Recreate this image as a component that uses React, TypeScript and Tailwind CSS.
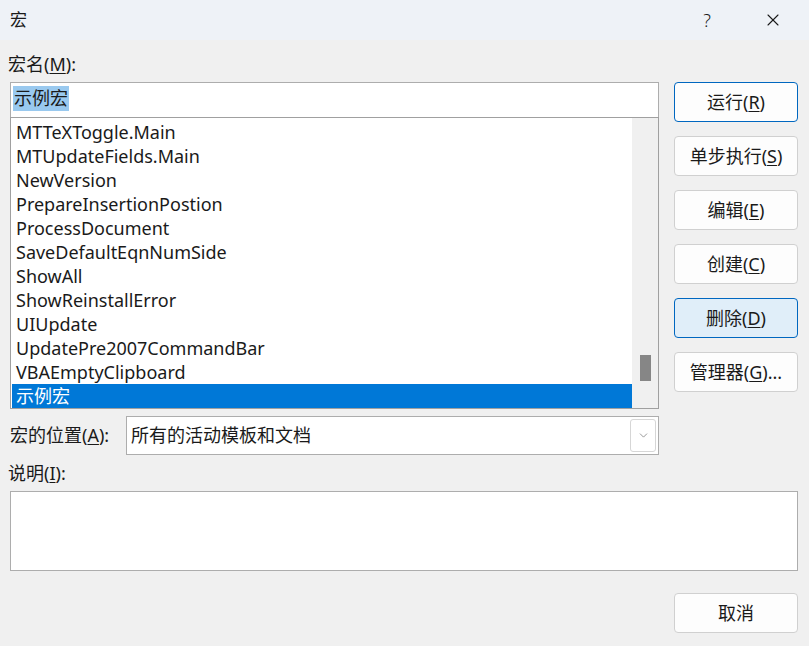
import { ChevronDown, X } from "lucide-react"

const macros = [
  "MTTeXToggle.Main",
  "MTUpdateFields.Main",
  "NewVersion",
  "PrepareInsertionPostion",
  "ProcessDocument",
  "SaveDefaultEqnNumSide",
  "ShowAll",
  "ShowReinstallError",
  "UIUpdate",
  "UpdatePre2007CommandBar",
  "VBAEmptyClipboard",
  "示例宏",
]

const font = "font-['Noto_Sans','Noto_Sans_CJK_SC',sans-serif]"

function Key({ k }: { k: string }) {
  return <span className="underline underline-offset-2">{k}</span>
}

function Btn({ label, k, tail = "", kind = "normal" }: { label: string; k?: string; tail?: string; kind?: "normal" | "default" | "hover" }) {
  const style =
    kind === "default"
      ? "border-[#0067c0] bg-[#fdfdfd]"
      : kind === "hover"
        ? "border-[#0067c0] bg-[#e0eef9]"
        : "border-[#d0d0d0] bg-[#fdfdfd]"
  return (
    <button className={`h-10 w-[124px] rounded-[4px] border text-[18px] leading-none text-[#1a1a1a] ${style}`}>
      {label}
      {k && (
        <>
          (<Key k={k} />)
        </>
      )}
      {tail}
    </button>
  )
}

export default function App() {
  return (
    <div className={`h-[646px] w-[809px] overflow-hidden bg-[#f0f0f0] text-[#1a1a1a] ${font}`}>
      {/* Title bar */}
      <div className="flex h-10 items-center bg-[#eef2f7] pl-[10px]">
        <span className="text-[17px]">宏</span>
        <span className="ml-auto mr-[52px] text-[18px] font-light">?</span>
        <X className="mr-[26px] h-[20px] w-[20px]" strokeWidth={1.3} />
      </div>

      {/* Top section */}
      <div className="flex pl-[10px] pr-[11px]">
        <div className="w-[649px]">
          <div className="-ml-[2px] flex h-[42px] items-center pt-[6px] text-[18px]">
            宏名(<Key k="M" />):
          </div>
          <div className="flex h-[36px] items-start border border-[#adadad] bg-white pl-[2px] pt-[3px]">
            <span className="bg-[#99c9ef] px-px text-[18px] leading-[25px]">示例宏</span>
          </div>
          <div className="-mt-px flex h-[292px] border border-[#a0a0a0] bg-white">
            <div className="flex-1 overflow-hidden pl-px pt-[2px]">
              {macros.map((m, i) => (
                <div
                  key={m}
                  className={`h-6 pl-[4px] text-[18px] leading-6 ${
                    i === macros.length - 1 ? "bg-[#0078d7] text-white" : ""
                  }`}
                >
                  {m}
                </div>
              ))}
            </div>
            <div className="flex w-[26px] flex-col items-center bg-[#f0f0f0] pt-[237px]">
              <div className="h-[26px] w-[11px] bg-[#868686]" />
            </div>
          </div>
          <div className="mt-[7px] flex h-[39px] items-center">
            <span className="w-[116px] text-[18px]">
              宏的位置(<Key k="A" />):
            </span>
            <div className="flex h-[39px] flex-1 items-center border border-[#adadad] bg-white pl-[4px] pr-[2px]">
              <span className="flex-1 text-[18px]">所有的活动模板和文档</span>
              <div className="flex h-[33px] w-[26px] items-center justify-center rounded-[3px] border border-[#d6d6d6]">
                <ChevronDown className="h-[13px] w-[13px] text-[#555]" strokeWidth={1.1} />
              </div>
            </div>
          </div>
        </div>

        <div className="ml-[15px] flex flex-col gap-[14px] pt-[42px]">
          <Btn label="运行" k="R" kind="default" />
          <Btn label="单步执行" k="S" />
          <Btn label="编辑" k="E" />
          <Btn label="创建" k="C" />
          <Btn label="删除" k="D" kind="hover" />
          <Btn label="管理器" k="G" tail="..." />
        </div>
      </div>

      {/* Description */}
      <div className="pl-[10px] pr-[11px]">
        <div className="-ml-[2px] flex h-[36px] items-center text-[18px]">
          说明(<Key k="I" />):
        </div>
        <div className="h-[80px] border border-[#adadad] bg-white" />
        <div className="mt-[22px] flex justify-end">
          <Btn label="取消" />
        </div>
      </div>
    </div>
  )
}
